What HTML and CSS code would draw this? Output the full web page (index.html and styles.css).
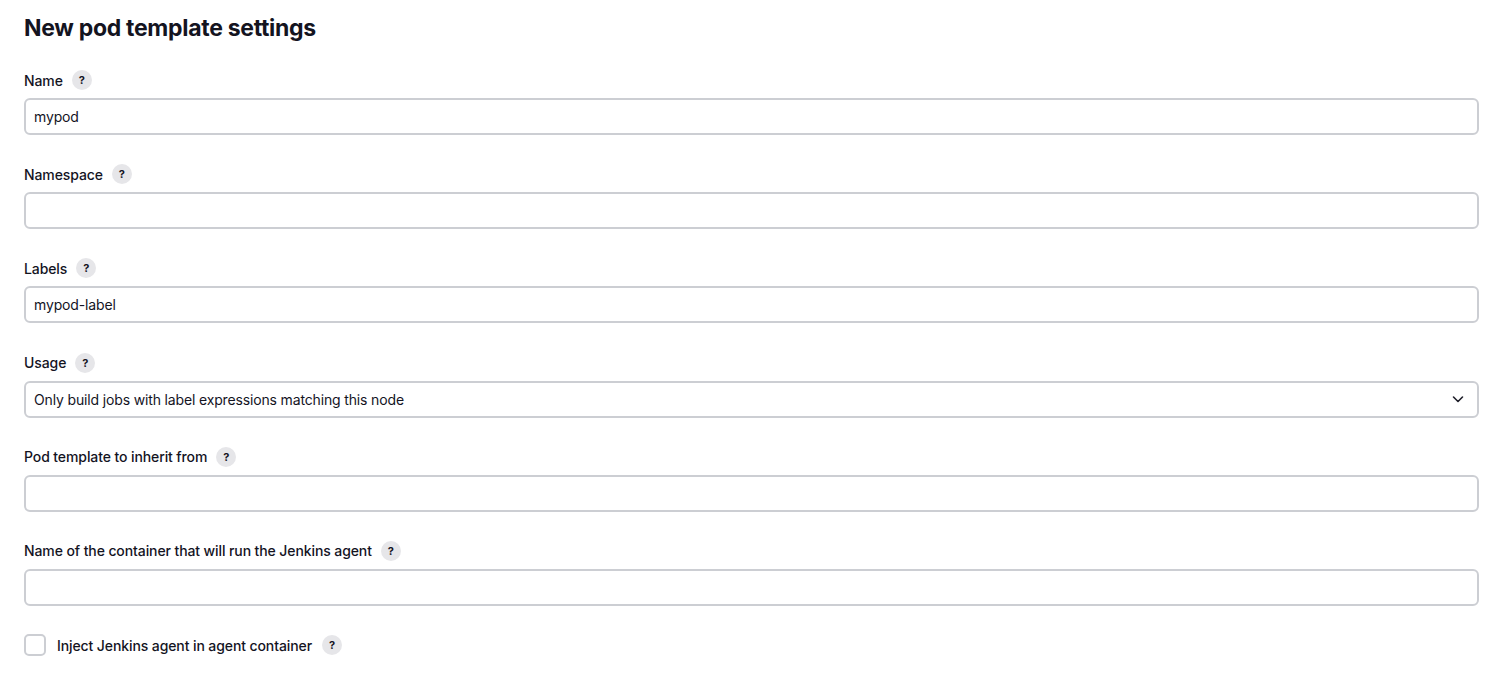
FILE: index.html
```html
<!DOCTYPE html>
<html>
<head>
<meta charset="utf-8">
<link rel="stylesheet" href="styles.css">
</head>
<body>
<div class="page">
  <h1 class="title">New pod template settings</h1>

  <div class="field">
    <div class="label">Name <span class="help">?</span></div>
    <input class="text" type="text" value="mypod">
  </div>

  <div class="field">
    <div class="label">Namespace <span class="help">?</span></div>
    <input class="text" type="text" value="">
  </div>

  <div class="field">
    <div class="label">Labels <span class="help">?</span></div>
    <input class="text" type="text" value="mypod-label">
  </div>

  <div class="field">
    <div class="label">Usage <span class="help">?</span></div>
    <div class="select">
      <span>Only build jobs with label expressions matching this node</span>
      <svg width="14" height="14" viewBox="0 0 14 14"><path d="M2.5 5l4.5 4.5 4.5-4.5" fill="none" stroke="#1f1f2a" stroke-width="1.6" stroke-linecap="round" stroke-linejoin="round"/></svg>
    </div>
  </div>

  <div class="field">
    <div class="label">Pod template to inherit from <span class="help">?</span></div>
    <input class="text" type="text" value="">
  </div>

  <div class="field">
    <div class="label">Name of the container that will run the Jenkins agent <span class="help">?</span></div>
    <input class="text" type="text" value="">
  </div>

  <div class="check-row">
    <span class="checkbox"></span>
    <span class="check-label">Inject Jenkins agent in agent container</span>
    <span class="help">?</span>
  </div>
</div>
</body>
</html>
```

FILE: styles.css
```css
body {
  margin: 0;
  background-color: #fff;
  font-family: Inter, "Noto Sans", sans-serif;
  color: #14141f;
}
.page {
  padding: 12px 19px 0 24px;
}
.title {
  margin: 0 0 24px;
  font-size: 23px;
  line-height: 32px;
  font-weight: 700;
  letter-spacing: -0.3px;
}
.field {
  margin-bottom: 27.2px;
}
.label {
  display: flex;
  align-items: center;
  height: 24px;
  margin-bottom: 6px;
  font-size: 14px;
  font-weight: 500;
  letter-spacing: -0.1px;
}
.help {
  display: inline-flex;
  align-items: center;
  justify-content: center;
  width: 20px;
  height: 20px;
  margin-left: 9px;
  border-radius: 50%;
  background-color: #e6e6e9;
  color: #14141f;
  font-size: 11px;
  font-weight: 700;
  letter-spacing: 0;
}
.text, .select {
  display: block;
  box-sizing: border-box;
  width: 100%;
  height: 37px;
  margin: 0;
  padding: 0 8px;
  border: 2px solid #ccced3;
  border-radius: 6px;
  background: #fff;
  font-family: Inter, "Noto Sans", sans-serif;
  font-size: 14px;
  letter-spacing: -0.15px;
  color: #14141f;
  outline: none;
}
.select {
  display: flex;
  align-items: center;
  justify-content: space-between;
  padding-right: 12px;
}
.check-row {
  display: flex;
  align-items: center;
  height: 24px;
  font-size: 14px;
  font-weight: 500;
  letter-spacing: -0.1px;
}
.checkbox {
  box-sizing: border-box;
  width: 22px;
  height: 22px;
  border: 2px solid #ccced3;
  border-radius: 5px;
  margin-right: 11px;
}
.check-row .help {
  margin-left: 10px;
}
```
